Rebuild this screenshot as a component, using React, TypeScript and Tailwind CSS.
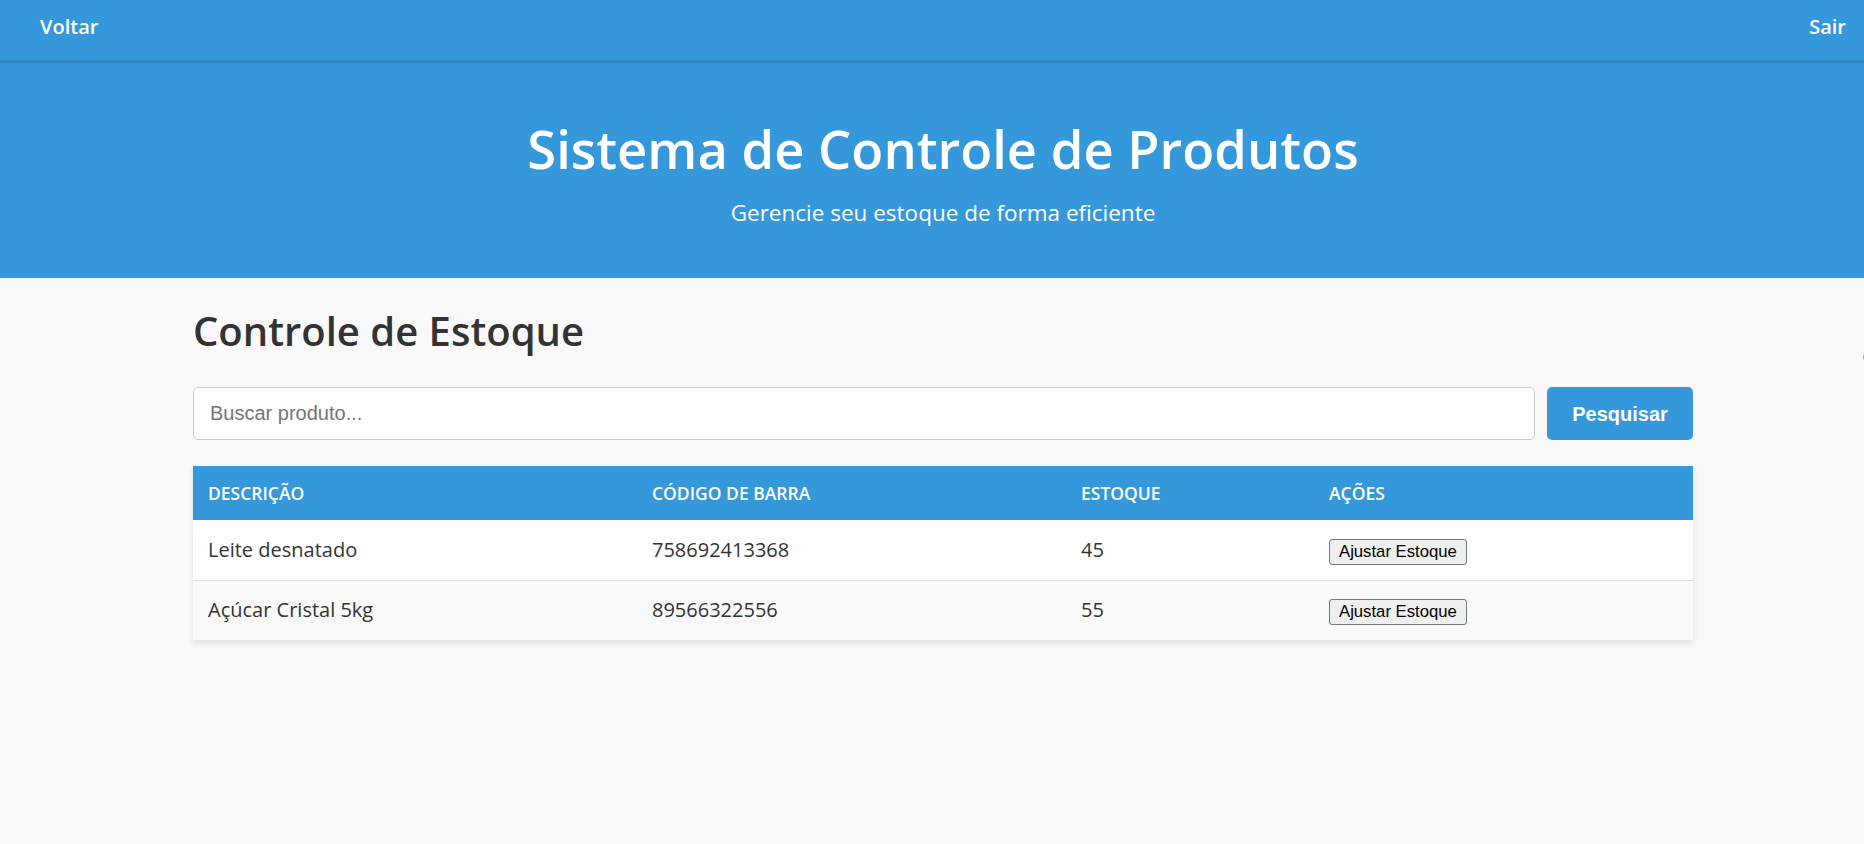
const products = [
  { id: 1, description: "Leite desnatado", barcode: "758692413368", stock: 45 },
  { id: 2, description: "Açúcar Cristal 5kg", barcode: "89566322556", stock: 55 },
];

export default function App() {
  return (
    <div className="relative w-full min-h-[844px] overflow-hidden bg-[#f9f9f9] font-['Open_Sans',sans-serif] text-[#333]">
      <div className="w-[1886px]">
        {/* Top nav */}
        <nav className="h-[63px] bg-[#3498db] border-b-[3px] border-[#2e86c1] px-[40px] pt-[13px] flex justify-between text-white text-[20px] font-semibold leading-[27px]">
          <a href="#">Voltar</a>
          <a href="#">Sair</a>
        </nav>

        {/* Hero */}
        <header className="bg-[#3498db] text-white text-center pt-[49px] pb-[50px]">
          <h1 className="text-[52.5px] font-semibold leading-[74px] mb-[11px]">Sistema de Controle de Produtos</h1>
          <p className="text-[22.5px] leading-[31px]">Gerencie seu estoque de forma eficiente</p>
        </header>

        {/* Main */}
        <main className="w-[1500px] mx-auto pt-[29px]">
          <h2 className="text-[40px] font-semibold leading-[48px] mb-[32px]">Controle de Estoque</h2>

          <div className="flex gap-[12px] mb-[26px]">
            <input
              type="text"
              placeholder="Buscar produto..."
              className="flex-1 h-[53px] px-[16px] bg-white border border-[#ccc] rounded-[5px] font-['Liberation_Sans',Arial,sans-serif] text-[20px] placeholder:text-[#757575] outline-none"
            />
            <button className="w-[146px] h-[53px] bg-[#3498db] text-white rounded-[5px] font-['Liberation_Sans',Arial,sans-serif] font-bold text-[20px]">
              Pesquisar
            </button>
          </div>

          <table className="w-full table-fixed border-collapse shadow-[0_3px_6px_rgba(0,0,0,0.1)]">
            <thead>
              <tr className="h-[54px] bg-[#3498db] text-white text-left text-[17.5px] font-semibold uppercase">
                <th className="w-[444px] px-[15px] font-semibold">Descrição</th>
                <th className="w-[429px] px-[15px] font-semibold">Código de Barra</th>
                <th className="w-[248px] px-[15px] font-semibold">Estoque</th>
                <th className="px-[15px] font-semibold">Ações</th>
              </tr>
            </thead>
            <tbody className="text-[20px]">
              {products.map((p, i) => (
                <tr
                  key={p.id}
                  className={`h-[60px] ${i % 2 === 0 ? "bg-white" : "bg-[#f9f9f9]"} ${i === 0 ? "border-b border-[#ddd]" : ""}`}
                >
                  <td className="px-[15px]">{p.description}</td>
                  <td className="px-[15px]">{p.barcode}</td>
                  <td className="px-[15px]">{p.stock}</td>
                  <td className="px-[15px]">
                    <button className="h-[26px] px-[9px] bg-[#efefef] border border-[#767676] rounded-[3px] text-black font-['Liberation_Sans',Arial,sans-serif] text-[16.7px] leading-[20px]">
                      Ajustar Estoque
                    </button>
                  </td>
                </tr>
              ))}
            </tbody>
          </table>
        </main>
      </div>

      {/* partly hidden element on the right edge */}
      <div className="absolute left-[1863px] top-[351px] w-[12px] h-[12px] rounded-full border-2 border-[#aaa]" />
    </div>
  );
}
